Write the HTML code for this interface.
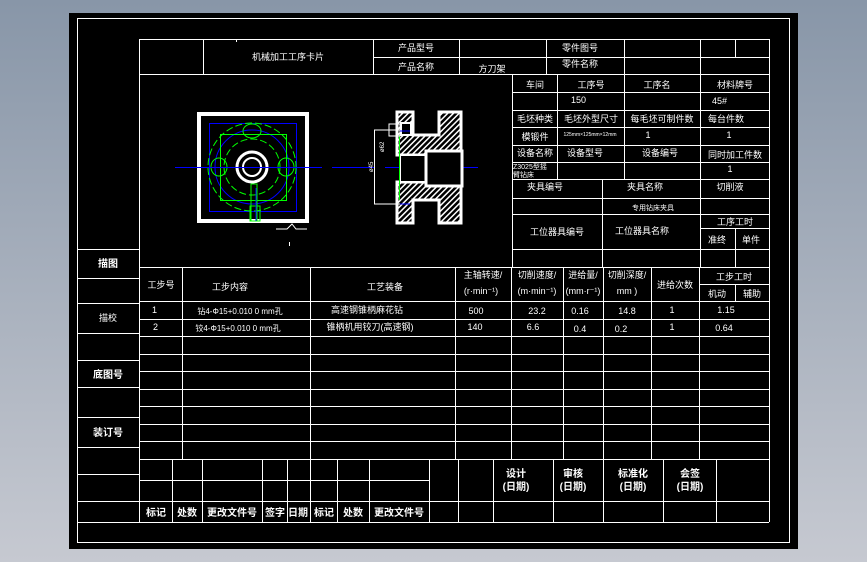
<!DOCTYPE html>
<html><head><meta charset="utf-8"><style>
html,body{margin:0;padding:0;}
body{width:867px;height:562px;overflow:hidden;background:linear-gradient(#8896a8,#c6c9d1);}
svg{position:absolute;left:0;top:0;}
text{font-family:"Liberation Sans","Noto Sans CJK SC",sans-serif;fill:#fff;font-size:9px;}
.b{font-weight:bold;font-size:10px;}
.s{font-size:6px;}
</style></head><body>
<svg width="867" height="562" viewBox="0 0 867 562" shape-rendering="crispEdges">
<defs>
<pattern id="h" width="4" height="4" patternUnits="userSpaceOnUse" patternTransform="rotate(45)">
<rect width="4" height="4" fill="#000"/><rect width="1.3" height="4" fill="#fff"/>
</pattern>
</defs>
<rect x="69" y="13" width="729" height="536" fill="#000"/>
<g stroke="#fff" stroke-width="1" fill="none">
<rect x="77.5" y="18.5" width="712" height="524"/>
<!-- left column -->
<line x1="139.5" y1="39" x2="139.5" y2="522"/>
<line x1="77" y1="249.5" x2="139" y2="249.5"/>
<line x1="77" y1="278.5" x2="139" y2="278.5"/>
<line x1="77" y1="303.5" x2="139" y2="303.5"/>
<line x1="77" y1="333.5" x2="139" y2="333.5"/>
<line x1="77" y1="360.5" x2="139" y2="360.5"/>
<line x1="77" y1="387.5" x2="139" y2="387.5"/>
<line x1="77" y1="417.5" x2="139" y2="417.5"/>
<line x1="77" y1="447.5" x2="139" y2="447.5"/>
<line x1="77" y1="474.5" x2="139" y2="474.5"/>
<line x1="77" y1="501.5" x2="769" y2="501.5"/>
<line x1="77" y1="522.5" x2="769" y2="522.5"/>
<line x1="769.5" y1="39" x2="769.5" y2="522"/>
<!-- title rows -->
<line x1="139" y1="39.5" x2="769" y2="39.5"/>
<line x1="373" y1="57.5" x2="769" y2="57.5"/>
<line x1="139" y1="74.5" x2="769" y2="74.5"/>
<line x1="203.5" y1="39" x2="203.5" y2="74"/>
<line x1="373.5" y1="39" x2="373.5" y2="74"/>
<line x1="459.5" y1="39" x2="459.5" y2="74"/>
<line x1="546.5" y1="39" x2="546.5" y2="74"/>
<line x1="624.5" y1="39" x2="624.5" y2="74"/>
<line x1="700.5" y1="39" x2="700.5" y2="74"/>
<line x1="735.5" y1="39" x2="735.5" y2="57"/>
<line x1="236.5" y1="39" x2="236.5" y2="42"/>
<!-- right info table -->
<line x1="512.5" y1="74" x2="512.5" y2="267"/>
<line x1="512" y1="92.5" x2="769" y2="92.5"/>
<line x1="512" y1="110.5" x2="769" y2="110.5"/>
<line x1="512" y1="127.5" x2="769" y2="127.5"/>
<line x1="512" y1="145.5" x2="769" y2="145.5"/>
<line x1="512" y1="162.5" x2="769" y2="162.5"/>
<line x1="512" y1="179.5" x2="769" y2="179.5"/>
<line x1="512" y1="198.5" x2="769" y2="198.5"/>
<line x1="512" y1="214.5" x2="769" y2="214.5"/>
<line x1="700" y1="228.5" x2="769" y2="228.5"/>
<line x1="512" y1="249.5" x2="769" y2="249.5"/>
<line x1="557.5" y1="74" x2="557.5" y2="179"/>
<line x1="624.5" y1="74" x2="624.5" y2="179"/>
<line x1="700.5" y1="74" x2="700.5" y2="267"/>
<line x1="602.5" y1="179" x2="602.5" y2="267"/>
<line x1="735.5" y1="228" x2="735.5" y2="267"/>
<!-- main table -->
<line x1="139" y1="267.5" x2="769" y2="267.5"/>
<line x1="139" y1="301.5" x2="769" y2="301.5"/>
<line x1="699" y1="284.5" x2="769" y2="284.5"/>
<line x1="139" y1="319.5" x2="769" y2="319.5"/>
<line x1="139" y1="336.5" x2="769" y2="336.5"/>
<line x1="139" y1="354.5" x2="769" y2="354.5"/>
<line x1="139" y1="371.5" x2="769" y2="371.5"/>
<line x1="139" y1="389.5" x2="769" y2="389.5"/>
<line x1="139" y1="406.5" x2="769" y2="406.5"/>
<line x1="139" y1="424.5" x2="769" y2="424.5"/>
<line x1="139" y1="441.5" x2="769" y2="441.5"/>
<line x1="139" y1="459.5" x2="769" y2="459.5"/>
<line x1="182.5" y1="267" x2="182.5" y2="459"/>
<line x1="310.5" y1="267" x2="310.5" y2="459"/>
<line x1="455.5" y1="267" x2="455.5" y2="459"/>
<line x1="511.5" y1="267" x2="511.5" y2="459"/>
<line x1="563.5" y1="267" x2="563.5" y2="459"/>
<line x1="603.5" y1="267" x2="603.5" y2="459"/>
<line x1="651.5" y1="267" x2="651.5" y2="459"/>
<line x1="699.5" y1="267" x2="699.5" y2="459"/>
<line x1="735.5" y1="284" x2="735.5" y2="301"/>
<!-- bottom sign section -->
<line x1="139" y1="480.5" x2="429" y2="480.5"/>
<line x1="172.5" y1="459" x2="172.5" y2="522"/>
<line x1="202.5" y1="459" x2="202.5" y2="522"/>
<line x1="262.5" y1="459" x2="262.5" y2="522"/>
<line x1="287.5" y1="459" x2="287.5" y2="522"/>
<line x1="310.5" y1="459" x2="310.5" y2="522"/>
<line x1="337.5" y1="459" x2="337.5" y2="522"/>
<line x1="369.5" y1="459" x2="369.5" y2="522"/>
<line x1="429.5" y1="459" x2="429.5" y2="522"/>
<line x1="458.5" y1="459" x2="458.5" y2="522"/>
<line x1="493.5" y1="459" x2="493.5" y2="522"/>
<line x1="553.5" y1="459" x2="553.5" y2="522"/>
<line x1="603.5" y1="459" x2="603.5" y2="522"/>
<line x1="663.5" y1="459" x2="663.5" y2="522"/>
<line x1="716.5" y1="459" x2="716.5" y2="522"/>
</g>

<!-- drawing: front view -->
<g fill="none" shape-rendering="auto">
<rect x="199" y="114" width="108" height="107" stroke="#fff" stroke-width="4"/>
<rect x="209.5" y="123.5" width="87" height="88" stroke="#00f" stroke-width="1"/>
<circle cx="252" cy="167" r="37" stroke="#00f"/>
<circle cx="252" cy="167" r="44" stroke="#0f0" stroke-dasharray="7 3"/>
<circle cx="252" cy="167" r="28" stroke="#0f0" stroke-dasharray="7 3"/>
<rect x="220.5" y="134.5" width="66" height="66" stroke="#0f0"/>
<circle cx="252" cy="167" r="15" stroke="#fff" stroke-width="3"/>
<circle cx="252" cy="167" r="9" stroke="#fff" stroke-width="2"/>
<ellipse cx="219" cy="167" rx="8" ry="9" stroke="#0f0"/>
<ellipse cx="286" cy="167" rx="8" ry="9" stroke="#0f0"/>
<ellipse cx="252" cy="131" rx="9" ry="7" stroke="#0f0"/>
<rect x="251" y="184" width="6" height="37" stroke="#0f0"/>
<rect x="250" y="206" width="10" height="15" stroke="#0f0"/>
<line x1="256" y1="188" x2="256" y2="221" stroke="#00f"/>
<line x1="175" y1="167.5" x2="322" y2="167.5" stroke="#00f"/>
<line x1="332" y1="167.5" x2="374" y2="167.5" stroke="#00f"/>
<line x1="385" y1="167.5" x2="422" y2="167.5" stroke="#00f"/>
<line x1="436" y1="167.5" x2="478" y2="167.5" stroke="#00f"/>
<polyline points="276,229 287,229 292,224 296,229 307,229" stroke="#fff"/>
<line x1="289.5" y1="242" x2="289.5" y2="246" stroke="#fff"/>
</g>
<!-- side view -->
<g shape-rendering="auto">
<path d="M397,112 H413 V135 H439 V112 H461 V155 H397 Z" fill="url(#h)" stroke="#fff" stroke-width="3"/>
<path d="M397,182 H461 V223 H439 V200 H413 V223 H397 Z" fill="url(#h)" stroke="#fff" stroke-width="3"/>
<rect x="400" y="155" width="26" height="27" fill="#000" stroke="#fff" stroke-width="2"/>
<rect x="426" y="151" width="36" height="35" fill="#000" stroke="#fff" stroke-width="3"/>
<rect x="401" y="123" width="10" height="12" fill="#000" stroke="#fff" stroke-width="2"/>
<line x1="399.5" y1="135" x2="399.5" y2="200" stroke="#0f0"/>
<g stroke="#fff" fill="none" stroke-width="1">
<polyline points="400,130 374.5,130 374.5,204 400,204"/>
<rect x="389" y="124" width="11" height="12"/>
</g>
<line x1="400" y1="131" x2="410" y2="131" stroke="#00f"/>
<line x1="400" y1="204" x2="410" y2="204" stroke="#00f"/>
<text x="0" y="0" class="s" transform="translate(384,152) rotate(-90)">ø62</text>
<text x="0" y="0" class="s" transform="translate(373,172) rotate(-90)">ø45</text>
</g>

<!-- title texts -->
<text x="288" y="60" text-anchor="middle">机械加工工序卡片</text>
<text x="416" y="51" text-anchor="middle">产品型号</text>
<text x="416" y="70" text-anchor="middle">产品名称</text>
<text x="492" y="72" text-anchor="middle">方刀架</text>
<text x="580" y="51" text-anchor="middle">零件图号</text>
<text x="580" y="67" text-anchor="middle">零件名称</text>

<text x="535" y="88" text-anchor="middle">车间</text>
<text x="591" y="88" text-anchor="middle">工序号</text>
<text x="657" y="88" text-anchor="middle">工序名</text>
<text x="735" y="88" text-anchor="middle">材料牌号</text>
<text x="571" y="103">150</text>
<text x="712" y="104">45#</text>
<text x="535" y="122" text-anchor="middle">毛坯种类</text>
<text x="591" y="122" text-anchor="middle">毛坯外型尺寸</text>
<text x="662" y="122" text-anchor="middle">每毛坯可制件数</text>
<text x="726" y="122" text-anchor="middle">每台件数</text>
<text x="535" y="140" text-anchor="middle">模锻件</text>
<text x="590" y="136" text-anchor="middle" style="font-size:5px">125mm×125mm×12mm</text>
<text x="648" y="138" text-anchor="middle">1</text>
<text x="729" y="138" text-anchor="middle">1</text>
<text x="535" y="156" text-anchor="middle">设备名称</text>
<text x="585" y="156" text-anchor="middle">设备型号</text>
<text x="660" y="156" text-anchor="middle">设备编号</text>
<text x="735" y="158" text-anchor="middle">同时加工件数</text>
<text x="513" y="169" style="font-size:7px">Z3025型摇</text>
<text x="513" y="177" style="font-size:7px">臂钻床</text>
<text x="730" y="172" text-anchor="middle">1</text>
<text x="545" y="190" text-anchor="middle">夹具编号</text>
<text x="645" y="190" text-anchor="middle">夹具名称</text>
<text x="730" y="190" text-anchor="middle">切削液</text>
<text x="653" y="210" text-anchor="middle" style="font-size:7px">专用钻床夹具</text>
<text x="557" y="235" text-anchor="middle">工位器具编号</text>
<text x="642" y="234" text-anchor="middle">工位器具名称</text>
<text x="735" y="225" text-anchor="middle">工序工时</text>
<text x="717" y="243" text-anchor="middle">准终</text>
<text x="751" y="243" text-anchor="middle">单件</text>

<!-- main header -->
<text x="161" y="288" text-anchor="middle">工步号</text>
<text x="230" y="290" text-anchor="middle">工步内容</text>
<text x="385" y="290" text-anchor="middle">工艺装备</text>
<text x="483" y="278" text-anchor="middle">主轴转速/</text>
<text x="481" y="294" text-anchor="middle">(r·min⁻¹)</text>
<text x="537" y="278" text-anchor="middle">切削速度/</text>
<text x="537" y="294" text-anchor="middle">(m·min⁻¹)</text>
<text x="583" y="278" text-anchor="middle">进给量/</text>
<text x="583" y="294" text-anchor="middle">(mm·r⁻¹)</text>
<text x="627" y="278" text-anchor="middle">切削深度/</text>
<text x="627" y="294" text-anchor="middle">mm )</text>
<text x="675" y="288" text-anchor="middle">进给次数</text>
<text x="734" y="280" text-anchor="middle">工步工时</text>
<text x="717" y="297" text-anchor="middle">机动</text>
<text x="752" y="297" text-anchor="middle">辅助</text>

<text x="152" y="313">1</text>
<text x="240" y="314" text-anchor="middle" style="font-size:8px">钻4-Φ15+0.010 0 mm孔</text>
<text x="367" y="313" text-anchor="middle">高速钢锥柄麻花钻</text>
<text x="476" y="314" text-anchor="middle">500</text>
<text x="537" y="314" text-anchor="middle">23.2</text>
<text x="580" y="314" text-anchor="middle">0.16</text>
<text x="627" y="314" text-anchor="middle">14.8</text>
<text x="672" y="313" text-anchor="middle">1</text>
<text x="726" y="313" text-anchor="middle">1.15</text>
<text x="153" y="330">2</text>
<text x="238" y="331" text-anchor="middle" style="font-size:8px">铰4-Φ15+0.010 0 mm孔</text>
<text x="370" y="330" text-anchor="middle">锥柄机用铰刀(高速钢)</text>
<text x="475" y="330" text-anchor="middle">140</text>
<text x="533" y="330" text-anchor="middle">6.6</text>
<text x="580" y="332" text-anchor="middle">0.4</text>
<text x="621" y="332" text-anchor="middle">0.2</text>
<text x="672" y="330" text-anchor="middle">1</text>
<text x="724" y="331" text-anchor="middle">0.64</text>

<!-- sign section -->
<text x="516" y="477" text-anchor="middle" class="b">设计</text>
<text x="516" y="490" text-anchor="middle" class="b">(日期)</text>
<text x="573" y="477" text-anchor="middle" class="b">审核</text>
<text x="573" y="490" text-anchor="middle" class="b">(日期)</text>
<text x="633" y="477" text-anchor="middle" class="b">标准化</text>
<text x="633" y="490" text-anchor="middle" class="b">(日期)</text>
<text x="690" y="477" text-anchor="middle" class="b">会签</text>
<text x="690" y="490" text-anchor="middle" class="b">(日期)</text>
<text x="156" y="516" text-anchor="middle" class="b">标记</text>
<text x="187" y="516" text-anchor="middle" class="b">处数</text>
<text x="232" y="516" text-anchor="middle" class="b">更改文件号</text>
<text x="275" y="516" text-anchor="middle" class="b">签字</text>
<text x="298" y="516" text-anchor="middle" class="b">日期</text>
<text x="324" y="516" text-anchor="middle" class="b">标记</text>
<text x="353" y="516" text-anchor="middle" class="b">处数</text>
<text x="399" y="516" text-anchor="middle" class="b">更改文件号</text>

<!-- left column labels -->
<text x="108" y="267" text-anchor="middle" class="b">描图</text>
<text x="108" y="321" text-anchor="middle">描校</text>
<text x="108" y="378" text-anchor="middle" class="b">底图号</text>
<text x="108" y="436" text-anchor="middle" class="b">装订号</text>
</svg>
</body></html>
